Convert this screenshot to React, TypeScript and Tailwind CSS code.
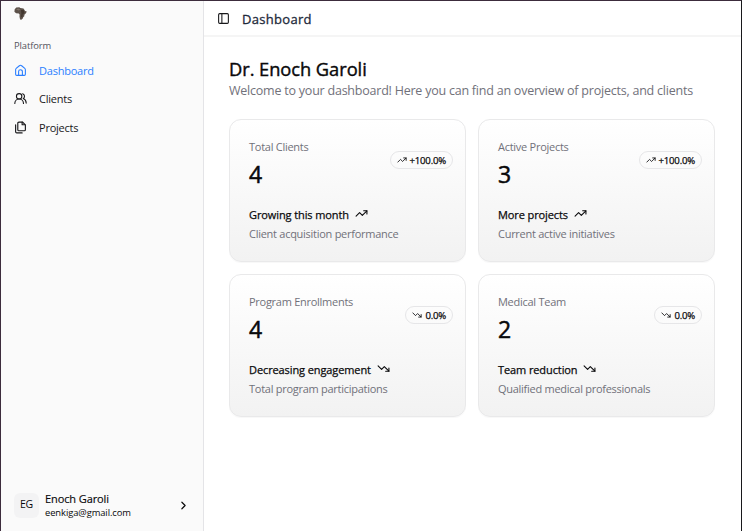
import React from "react";
import { TrendingUp, TrendingDown, PanelLeft, ChevronRight } from "lucide-react";

type Stat = {
  label: string;
  value: string;
  change: string;
  up: boolean;
  note: string;
  detail: string;
};

const stats: Stat[] = [
  { label: "Total Clients", value: "4", change: "+100.0%", up: true, note: "Growing this month", detail: "Client acquisition performance" },
  { label: "Active Projects", value: "3", change: "+100.0%", up: true, note: "More projects", detail: "Current active initiatives" },
  { label: "Program Enrollments", value: "4", change: "0.0%", up: false, note: "Decreasing engagement", detail: "Total program participations" },
  { label: "Medical Team", value: "2", change: "0.0%", up: false, note: "Team reduction", detail: "Qualified medical professionals" },
];

function StatCard({ stat }: { stat: Stat }) {
  const Trend = stat.up ? TrendingUp : TrendingDown;
  return (
    <section className="flex h-[143px] flex-col rounded-[12px] border border-[#e9e9ea] bg-linear-to-b from-white to-[#f2f2f2] px-[19px] pt-[18px] shadow-[0_1px_1px_rgba(0,0,0,0.03)]">
      <div className="flex h-[51px] justify-between">
        <div>
          <p className="h-[17px] text-[11px] leading-[17px] tracking-[-0.27px] text-[#71717a]">{stat.label}</p>
          <p className="mt-[5px] text-[23px] leading-[28px] text-[#09090b] [-webkit-text-stroke:0.5px]">{stat.value}</p>
        </div>
        <div className="mt-[13px] -mr-[7px] flex h-[18px] items-center gap-[3px] rounded-full border border-[#e6e6e8] px-[6px] text-[#09090b]">
          <Trend className="size-[10px]" strokeWidth={2} />
          <span className="mt-[1px] text-[9.6px] leading-none tracking-[-0.2px] [-webkit-text-stroke:0.25px]">{stat.change}</span>
        </div>
      </div>
      <div className="mt-[17px] flex h-[17px] items-center gap-[6px] text-[#09090b]">
        <span className="text-[11px] leading-[17px] tracking-[-0.1px] [-webkit-text-stroke:0.25px]">{stat.note}</span>
        <Trend className="mb-[3px] size-[13px]" strokeWidth={2} />
      </div>
      <p className="mt-[2px] text-[11px] leading-[17px] tracking-[-0.27px] text-[#71717a]">{stat.detail}</p>
    </section>
  );
}

function AfricaLogo() {
  return (
    <svg className="h-[13px] w-[13px]" viewBox="0 0 13 13" fill="none">
      <path d="M2.3 .6 5.3 .3 6.3 1.1 9.5 1.4 11.1 4.1 12.8 4.4 11.9 6.3 10.4 7.8 10.3 9.3 9.2 10.3 8.8 11.5 7.3 12.8 6.1 12.4 5.5 9.8 5.6 7.6 4.8 6.4 2.1 6.3 .4 4.7 .7 2.2Z" fill="#5c5149" />
      <path d="m2 2.3 2.5-.7 2 1.2-2 .7Z" fill="#80746a" />
      <path d="m7 3 2.7.1.7 3-1.8 1.5-.2 2.7L7 9.8l.4-3Z" fill="#42372f" />
    </svg>
  );
}

type IconProps = { className?: string };

function HomeIcon({ className }: IconProps) {
  return (
    <svg className={className} viewBox="0 0 24 24" fill="none" stroke="currentColor" strokeWidth={2} strokeLinecap="round" strokeLinejoin="round">
      <path d="M3 10.5a3 3 0 0 1 1.1-2.3l5.8-5a3.2 3.2 0 0 1 4.2 0l5.8 5a3 3 0 0 1 1.1 2.3V19a2 2 0 0 1-2 2H5a2 2 0 0 1-2-2Z" />
      <path d="M8.5 21v-7a3.5 3.5 0 0 1 7 0v7" />
    </svg>
  );
}

function ClientsIcon({ className }: IconProps) {
  return (
    <svg className={className} viewBox="0 0 24 24" fill="none" stroke="currentColor" strokeWidth={2} strokeLinecap="round" strokeLinejoin="round">
      <circle cx="9.5" cy="8" r="5" />
      <path d="M1.5 21a8 8 0 0 1 16 0" />
      <path d="M16 3.2a5 5 0 0 1 1 9c3.5 1.5 5.5 4.8 5.5 8.3" />
    </svg>
  );
}

function FilesIcon({ className }: IconProps) {
  return (
    <svg className={className} viewBox="0 0 24 24" fill="none" stroke="currentColor" strokeWidth={2.1} strokeLinecap="round" strokeLinejoin="round">
      <path d="M15 2v5h5" />
      <path d="M9 18a2 2 0 0 1-2-2V4a2 2 0 0 1 2-2h7l5 5v9a2 2 0 0 1-2 2Z" />
      <path d="M3 7v13a2 2 0 0 0 2 2h10" />
    </svg>
  );
}

const nav = [
  { label: "Dashboard", icon: HomeIcon, style: "text-[#2b7fff]" },
  { label: "Clients", icon: ClientsIcon, style: "text-[#18181b]" },
  { label: "Projects", icon: FilesIcon, style: "text-[#18181b]" },
];

export default function App() {
  return (
    <div className="flex h-[531px] w-[742px] overflow-hidden border-t border-r border-l border-t-[#3c2c3c] border-r-[#18181b] border-l-[#3c2c3c] bg-white font-['Open_Sans','Noto_Sans',sans-serif]">
      <aside className="flex w-[203px] shrink-0 flex-col border-r border-[#e4e4e7] bg-[#fafafa] pl-[13px]">
        <div className="h-[37px] pt-[6px]"><AfricaLogo /></div>
        <p className="h-[16px] text-[9.4px] leading-[15px] tracking-[-0.1px] text-[#52525b]">Platform</p>
        <nav className="mt-[2px]">
          {nav.map(({ label, icon: Icon, style }) => (
            <a key={label} className={`flex h-[28.5px] items-center gap-[12px] ${style}`}>
              <Icon className="size-[13px]" />
              <span className="text-[11px] leading-[17px] tracking-[-0.23px]">{label}</span>
            </a>
          ))}
        </nav>
        <div className="mt-auto mb-[12px] flex h-[28px] items-center text-[#09090b]">
          <div className="flex size-[25px] items-center justify-center rounded-[6px] bg-[#f3f3f4] text-[10.5px] tracking-[-0.3px]">EG</div>
          <div className="ml-[6px] w-[132px]">
            <p className="text-[11px] leading-[14px] tracking-[-0.1px] [-webkit-text-stroke:0.15px]">Enoch Garoli</p>
            <p className="text-[9.4px] leading-[13px] tracking-[-0.08px]">eenkiga@gmail.com</p>
          </div>
          <ChevronRight className="size-[13px]" strokeWidth={2.2} />
        </div>
      </aside>
      <main className="min-w-0 flex-1">
        <header className="flex h-[36px] items-center gap-[11px] border-b-2 border-[#f5f5f5] pl-[13px]">
          <PanelLeft className="size-[13px] text-[#18181b]" strokeWidth={2} />
          <h1 className="mt-[1px] ml-[1px] text-[13px] leading-[20px] tracking-[0.3px] text-[#1e293b] [-webkit-text-stroke:0.3px]">Dashboard</h1>
        </header>
        <div className="pt-[19px] pr-[26px] pl-[25px]">
          <h2 className="text-[18.3px] leading-[26px] tracking-[-0.05px] text-[#09090b] [-webkit-text-stroke:0.4px]">Dr. Enoch Garoli</h2>
          <p className="text-[12.5px] leading-[17px] tracking-[-0.225px] text-[#71717a]">Welcome to your dashboard! Here you can find an overview of projects, and clients</p>
          <div className="mt-[20px] grid grid-cols-2 gap-x-[12px] gap-y-[12px]">
            {stats.map((stat) => <StatCard key={stat.label} stat={stat} />)}
          </div>
        </div>
      </main>
    </div>
  );
}
